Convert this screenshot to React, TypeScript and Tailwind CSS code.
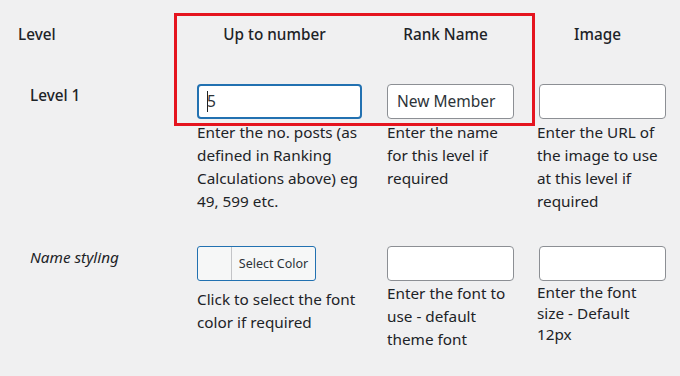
import type { ReactNode } from 'react'

const font = "font-['Noto_Sans','Open_Sans',sans-serif]"

function Lines({ lines, className = '' }: { lines: string[]; className?: string }) {
  return (
    <div className={className}>
      {lines.map((l) => (
        <div key={l} className="whitespace-nowrap">{l}</div>
      ))}
    </div>
  )
}

function Field({ width, value, focused }: { width: string; value?: ReactNode; focused?: boolean }) {
  return (
    <div
      className={`${width} flex h-[35px] items-center rounded-[4px] bg-white text-[15.5px] text-[#2c3338] ${
        focused ? 'border-2 border-[#2271b1] px-[8px]' : 'border border-[#8c8f94] px-[9px]'
      }`}
    >
      {value}
    </div>
  )
}

export default function App() {
  return (
    <div className={`relative h-[376px] w-[680px] overflow-hidden bg-[#f0f0f1] ${font} text-[15.3px] leading-[23px] text-[#1d2327]`}>
      <div className="grid grid-cols-[187px_190px_152px_151px] pt-[23px]">
        {/* header */}
        <div className="h-[61px] pl-[18px] font-medium">Level</div>
        <div className="pr-[15px] text-center font-medium">Up to number</div>
        <div className="pr-[15px] text-center font-medium">Rank Name</div>
        <div className="pr-[14px] text-center font-medium">Image</div>

        {/* level 1 */}
        <div className="h-[162px] pl-[30px] font-medium">Level 1</div>
        <div className="pl-[10px]">
          <Field
            width="w-[165px]"
            focused
            value={
              <span className="flex items-center">
                <span className="mr-[-1px] h-[21px] w-px bg-[#1d2327]" />
                5
              </span>
            }
          />
          <Lines
            className="mt-[2px]"
            lines={['Enter the no. posts (as', 'defined in Ranking', 'Calculations above) eg', '49, 599 etc.']}
          />
        </div>
        <div className="pl-[10px]">
          <Field width="w-[127px]" value="New Member" />
          <Lines className="mt-[2px]" lines={['Enter the name', 'for this level if', 'required']} />
        </div>
        <div className="pl-[10px]">
          <Field width="w-[127px]" />
          <Lines className="ml-[-2px] mt-[2px]" lines={['Enter the URL of', 'the image to use', 'at this level if', 'required']} />
        </div>

        {/* name styling */}
        <div className="pl-[30px] italic">Name styling</div>
        <div className="pl-[10px]">
          <div className="flex h-[35px] w-[119px] overflow-hidden rounded-[3px] border border-[#2271b1] bg-[#f6f7f7]">
            <div className="w-[34px] border-r border-[#c3c4c7]" />
            <div className="flex flex-1 items-center justify-center text-[12.5px] text-[#2c3338]">Select Color</div>
          </div>
          <Lines className="mt-[7px]" lines={['Click to select the font', 'color if required']} />
        </div>
        <div className="pl-[10px]">
          <Field width="w-[127px]" />
          <Lines className="mt-[1px]" lines={['Enter the font to', 'use - default', 'theme font']} />
        </div>
        <div className="pl-[10px]">
          <Field width="w-[127px]" />
          <Lines className="ml-[-2px] mt-[1px] leading-[21px]" lines={['Enter the font', 'size - Default', '12px']} />
        </div>
      </div>

      <div className="absolute left-[174px] top-[13px] h-[113px] w-[361px] border-[3px] border-[#e5141f]" />
    </div>
  )
}
